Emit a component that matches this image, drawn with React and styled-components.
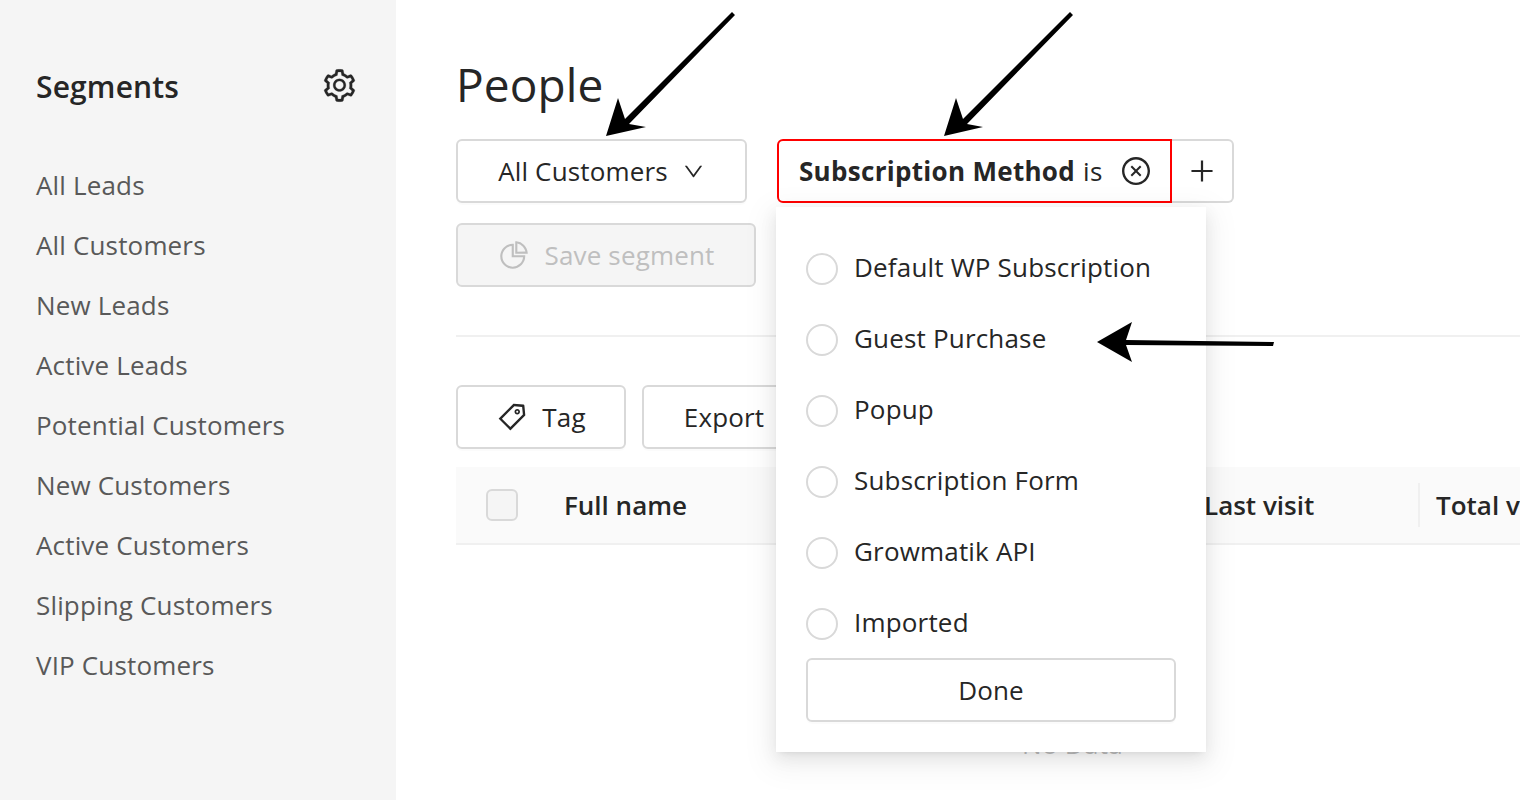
import React from "react";
import styled, { createGlobalStyle } from "styled-components";
import {
  AiOutlineSetting,
  AiOutlineDown,
  AiOutlineCloseCircle,
  AiOutlinePlus,
  AiOutlinePieChart,
  AiOutlineTag,
} from "react-icons/ai";

const GlobalStyle = createGlobalStyle`
  html, body {
    margin: 0;
    padding: 0;
    background: #fff;
    overflow: hidden;
  }
  * { box-sizing: border-box; }
  body {
    font-family: "Open Sans", "Noto Sans", "Liberation Sans", sans-serif;
    color: #262626;
  }
`;

const Page = styled.div`
  position: relative;
  display: flex;
  width: 1520px;
  height: 800px;
  overflow: hidden;
`;

const Sidebar = styled.aside`
  flex: 0 0 396px;
  height: 100%;
  background: #f5f5f5;
  padding: 62px 40px 0 36px;
`;

const SidebarHead = styled.div`
  display: flex;
  align-items: center;
  justify-content: space-between;
  height: 48px;
  margin-bottom: 46px;
  font-size: 30px;
  font-weight: 600;
  letter-spacing: 0.15px;
  color: #262626;
  svg {
    font-size: 37px;
    margin-right: -2px;
    margin-top: -2px;
    stroke: currentColor;
    stroke-width: 6;
  }
`;

const SegmentItem = styled.div`
  height: 60px;
  line-height: 59px;
  font-size: 26px;
  letter-spacing: 0.16px;
  color: #595959;
  white-space: nowrap;
`;

const Main = styled.main`
  flex: 1;
  min-width: 0;
  padding: 54px 0 0 60px;
`;

const Title = styled.h1`
  margin: 0 0 25px;
  height: 60px;
  line-height: 60px;
  font-size: 46px;
  font-weight: 400;
  letter-spacing: 0.1px;
  color: #262626;
`;

const Row = styled.div`
  display: flex;
  gap: ${(p) => p.$gap || 0}px;
  margin-bottom: ${(p) => p.$bottom || 0}px;
`;

const Button = styled.div`
  display: flex;
  align-items: center;
  justify-content: center;
  gap: ${(p) => p.$gap || 0}px;
  flex: 0 0 auto;
  width: ${(p) => p.$width}px;
  height: 64px;
  border: 2px solid #d9d9d9;
  border-radius: 6px;
  background: ${(p) => (p.$disabled ? "#f5f5f5" : "#fff")};
  color: ${(p) => (p.$disabled ? "#bfbfbf" : "#262626")};
  box-shadow: ${(p) => (p.$disabled ? "none" : "0 2px 0 rgba(0, 0, 0, 0.015)")};
  font-size: 26px;
  letter-spacing: 0.15px;
  white-space: nowrap;
`;

const Chevron = styled(AiOutlineDown)`
  font-size: 23px;
  margin-top: 1px;
`;

const FilterWrap = styled.div`
  position: relative;
  display: flex;
  margin-left: 30px;
`;

const Chip = styled.div`
  display: flex;
  align-items: center;
  width: 395px;
  height: 64px;
  padding-left: 20px;
  border: 2px solid #f00;
  border-radius: 6px 0 0 6px;
  font-size: 26px;
  letter-spacing: 0.3px;
  white-space: nowrap;
  b {
    font-weight: 700;
    margin-right: 8px;
  }
  svg {
    font-size: 32px;
    margin-left: 17px;
  }
`;

const PlusButton = styled.div`
  display: flex;
  align-items: center;
  justify-content: center;
  width: 62px;
  height: 64px;
  border: 2px solid #d9d9d9;
  border-left: 0;
  border-radius: 0 6px 6px 0;
  font-size: 30px;
`;

const Dropdown = styled.div`
  position: absolute;
  top: 68px;
  left: -1px;
  z-index: 2;
  width: 430px;
  height: 545px;
  padding: 26px 30px 0;
  background: #fff;
  box-shadow: 0 3px 6px -4px rgba(0, 0, 0, 0.12), 0 6px 16px rgba(0, 0, 0, 0.08),
    0 9px 28px 8px rgba(0, 0, 0, 0.05);
`;

const Option = styled.div`
  display: flex;
  align-items: center;
  gap: 16px;
  height: 71px;
  font-size: 26px;
  letter-spacing: 0.18px;
  color: #262626;
  white-space: nowrap;
`;

const OptionLabel = styled.span`
  margin-top: -3px;
`;

const Radio = styled.span`
  flex: 0 0 32px;
  height: 32px;
  border: 2px solid #d9d9d9;
  border-radius: 50%;
  background: #fff;
`;

const DoneButton = styled(Button)`
  width: 370px;
  margin-top: -1px;
`;

const Divider = styled.div`
  height: 2px;
  margin: 48px 0 48px;
  background: #f0f0f0;
`;

const TableHead = styled.div`
  display: flex;
  align-items: center;
  height: 78px;
  margin-top: 18px;
  background: #fafafa;
  border-bottom: 2px solid #f0f0f0;
`;

const HeadCell = styled.div`
  flex: 0 0 ${(p) => p.$width}px;
  display: flex;
  align-items: center;
  height: 44px;
  padding-left: ${(p) => p.$pad || 0}px;
  border-right: ${(p) => (p.$divider ? "2px solid #f0f0f0" : "0")};
  font-size: 26px;
  font-weight: 600;
  letter-spacing: 0;
  white-space: nowrap;
`;

const Checkbox = styled.span`
  width: 32px;
  height: 32px;
  border: 2px solid #d9d9d9;
  border-radius: 6px;
  background: #f5f5f5;
`;

const Empty = styled.div`
  margin: 181px 0 0;
  padding-left: 566px;
  font-size: 26px;
  letter-spacing: 0.3px;
  color: #bfbfbf;
`;

const Arrows = styled.svg`
  position: absolute;
  inset: 0;
  z-index: 3;
  pointer-events: none;
`;

const segments = [
  "All Leads",
  "All Customers",
  "New Leads",
  "Active Leads",
  "Potential Customers",
  "New Customers",
  "Active Customers",
  "Slipping Customers",
  "VIP Customers",
];

const methods = [
  "Default WP Subscription",
  "Guest Purchase",
  "Popup",
  "Subscription Form",
  "Growmatik API",
  "Imported",
];

const App = () => {
  return (
    <>
      <GlobalStyle />
      <Page>
        <Sidebar>
          <SidebarHead>
            Segments
            <AiOutlineSetting />
          </SidebarHead>
          {segments.map((name) => (
            <SegmentItem key={name}>{name}</SegmentItem>
          ))}
        </Sidebar>
        <Main>
          <Title>People</Title>
          <Row $bottom={20}>
            <Button $width={291} $gap={14}>
              All Customers
              <Chevron />
            </Button>
            <FilterWrap>
              <Chip>
                <b>Subscription Method</b> is
                <AiOutlineCloseCircle />
              </Chip>
              <PlusButton>
                <AiOutlinePlus />
              </PlusButton>
              <Dropdown>
                {methods.map((name) => (
                  <Option key={name}>
                    <Radio />
                    <OptionLabel>{name}</OptionLabel>
                  </Option>
                ))}
                <DoneButton>Done</DoneButton>
              </Dropdown>
            </FilterWrap>
          </Row>
          <Button $width={300} $gap={15} $disabled>
            <AiOutlinePieChart size={32} />
            Save segment
          </Button>
          <Divider />
          <Row $gap={16}>
            <Button $width={170} $gap={14}>
              <AiOutlineTag size={32} />
              Tag
            </Button>
            <Button $width={164}>Export</Button>
          </Row>
          <TableHead>
            <HeadCell $width={108} $pad={30}>
              <Checkbox />
            </HeadCell>
            <HeadCell $width={640}>Full name</HeadCell>
            <HeadCell $width={216} $divider>
              Last visit
            </HeadCell>
            <HeadCell $width={120} $pad={16}>
              Total visits
            </HeadCell>
          </TableHead>
          <Empty>No Data</Empty>
        </Main>
        <Arrows width="1520" height="800" viewBox="0 0 1520 800">
          <path d="M606 136 L618 98 L625 119 L732 12 L735 15 L629 124 L646 127 Z" />
          <path d="M944 136 L956 98 L963 119 L1070 12 L1073 15 L967 124 L983 127 Z" />
          <path d="M1097 342 L1132 322 L1126 340 L1274 342 L1273 346 L1126 345 L1132 362 Z" />
        </Arrows>
      </Page>
    </>
  );
};

export default App;
